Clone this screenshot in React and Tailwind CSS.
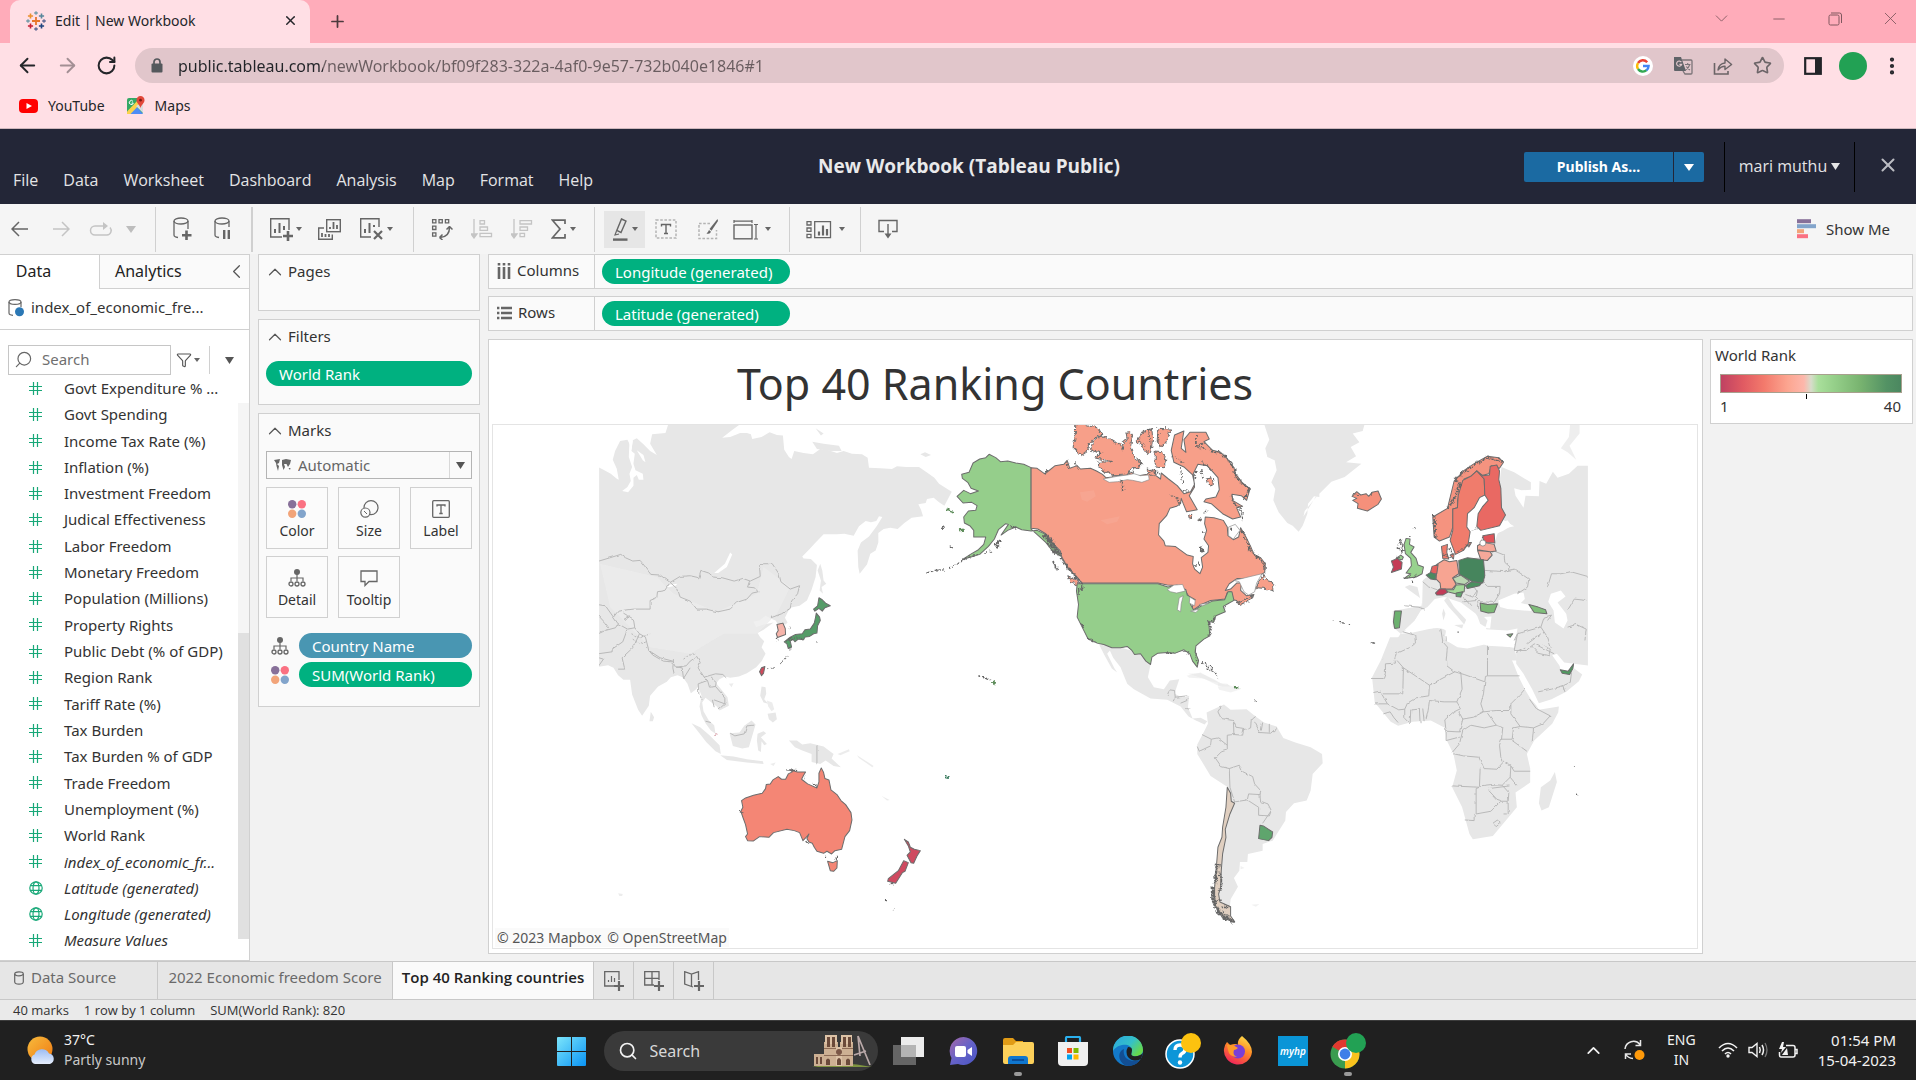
import React from "react";
import { ArrowLeft, ArrowRight, RotateCw, X, Plus, Minus, ChevronDown, ChevronUp, ChevronLeft, Star, MoreVertical, Search, Filter } from "lucide-react";

const UI = "font-['Noto_Sans','Open_Sans',sans-serif]";

/* ---------- small shared pieces ---------- */

function Svg({ w = 24, h = 24, children, className = "" }) {
  return (
    <svg width={w} height={h} viewBox={`0 0 ${w} ${h}`} fill="none" className={`shrink-0 ${className}`} aria-hidden="true">
      {children}
    </svg>
  );
}

function Caret({ className = "text-[#666]", w = 7, h = 5 }) {
  return (
    <Svg w={w} h={h} className={className}>
      <path d={`M0 0H${w}L${w / 2} ${h}Z`} fill="currentColor" />
    </Svg>
  );
}

function FourDots({ s = 18 }) {
  return (
    <svg width={s} height={s} viewBox="0 0 18 18" className="shrink-0" aria-hidden="true">
      <circle cx="4.2" cy="4.2" r="4.2" fill="#877099" />
      <circle cx="13.8" cy="4.2" r="4.2" fill="#fa7182" />
      <circle cx="4.2" cy="13.8" r="4.2" fill="#f2a479" />
      <circle cx="13.8" cy="13.8" r="4.2" fill="#82a4cb" />
    </svg>
  );
}

function DetailIcon() {
  return (
    <Svg w={18} h={18}>
      <circle cx="9" cy="3" r="3" fill="#666" />
      <path d="M9 5V12M3 12V9H15V12" stroke="#666" strokeWidth="1.2" />
      <circle cx="3" cy="15" r="2" stroke="#666" strokeWidth="1.3" />
      <circle cx="9" cy="15" r="2" stroke="#666" strokeWidth="1.3" />
      <circle cx="15" cy="15" r="2" stroke="#666" strokeWidth="1.3" />
    </Svg>
  );
}

function TableauLogo() {
  const plus = (x, y, r, c, w = 1.6) => <path key={`${x}-${y}`} d={`M${x - r} ${y}H${x + r}M${x} ${y - r}V${y + r}`} stroke={c} strokeWidth={w} />;
  return (
    <Svg w={20} h={20}>
      {[
        plus(10, 10, 4, "#e8762b", 1.8), plus(4.5, 5, 2.6, "#eb912c"), plus(15.5, 5, 2.6, "#59879b"),
        plus(4.5, 15, 2.6, "#c72035"), plus(15.5, 15, 2.6, "#1f447e"), plus(10, 2, 1.8, "#7099a6", 1.3),
        plus(10, 18, 1.8, "#5b6591", 1.3), plus(2, 10, 1.8, "#7099a6", 1.3), plus(18, 10, 1.8, "#5b6591", 1.3),
      ]}
    </Svg>
  );
}

/* ---------- browser chrome ---------- */

function BrowserChrome() {
  return (
    <header className={`${UI} shrink-0 bg-[#ffdfe5] text-[#24262a] border-b border-[#cfb7bc]`}>
      <div className="flex h-[43px] items-stretch bg-[#ffacba]">
        <div className="ml-[10px] flex w-[300px] items-center rounded-t-[10px] bg-[#ffdfe5] pr-[12px] pb-[2px] pl-4">
          <TableauLogo />
          <span className="ml-[9px] flex-1 text-[14px]">Edit | New Workbook</span>
          <button aria-label="Close tab"><X size={15} strokeWidth={2.4} /></button>
        </div>
        <button aria-label="New tab" className="ml-[18px] text-[#4c3a3e]"><Plus size={19} strokeWidth={2.2} /></button>
        <div className="ml-auto flex items-center pb-[6px] text-[#80585f]">
          <button aria-label="Search tabs" className="grid w-[57px] place-items-center"><ChevronDown size={21} strokeWidth={1} /></button>
          <button aria-label="Minimize" className="grid w-[57px] place-items-center"><Minus size={18} strokeWidth={1.2} /></button>
          <button aria-label="Restore" className="grid w-[57px] place-items-center">
            <Svg w={15} h={14}><rect x="1" y="3" width="10" height="10" rx="1.5" stroke="currentColor" /><path d="M3 1H11.5Q13.5 1 13.5 3V11" stroke="currentColor" /></Svg>
          </button>
          <button aria-label="Close" className="grid w-[52px] place-items-center"><X size={21} strokeWidth={1} /></button>
        </div>
      </div>
      <div className="flex h-[45px] items-center pr-[15px] pl-[16px]">
        <button aria-label="Back"><ArrowLeft size={23} strokeWidth={2} /></button>
        <button aria-label="Forward" className="ml-[17px] text-[#a38f94]"><ArrowRight size={23} strokeWidth={2} /></button>
        <button aria-label="Reload" className="ml-[17px]"><RotateCw size={21} strokeWidth={2.3} /></button>
        <div className="ml-[18px] flex h-[35px] flex-1 items-center rounded-full bg-[#e1c6cb] pr-[12px] pl-[16px]">
          <Svg w={12} h={15}><path d="M3 6V4a3 3 0 0 1 6 0V6" stroke="#54585c" strokeWidth="1.7" /><rect x="0.5" y="5.5" width="11" height="9" rx="1" fill="#54585c" /></Svg>
          <input
            aria-label="Address"
            readOnly
            value="public.tableau.com/newWorkbook/bf09f283-322a-4af0-9e57-732b040e1846#1"
            className="ml-[15px] min-w-0 flex-1 bg-[linear-gradient(90deg,#222428_145px,#6a5d60_145px)] bg-clip-text text-[16px] text-transparent outline-none"
          />
          <div className="flex items-center gap-[20px] text-[#6b6467]">
            <Svg w={20} h={20}>
              <circle cx="10" cy="10" r="10" fill="#fff" />
              <path d="M14.2 6.2A5.8 5.8 0 0 0 5 7" stroke="#ea4335" strokeWidth="2.4" />
              <path d="M5 7A5.8 5.8 0 0 0 5 13" stroke="#fbbc05" strokeWidth="2.4" />
              <path d="M5 13A5.8 5.8 0 0 0 13.6 14.2" stroke="#34a853" strokeWidth="2.4" />
              <path d="M13.4 14.4A5.8 5.8 0 0 0 15.6 10H10" stroke="#4285f4" strokeWidth="2.4" />
            </Svg>
            <Svg w={20} h={19}>
              <path d="M1 1H8L13 15H2Q1 15 1 14Z" fill="#5f6368" />
              <path d="M9 4H18Q19 4 19 5V17Q19 18 18 18H12L10 15" stroke="#7b7478" strokeWidth="1.3" />
              <path d="M8.4 6.2A2.6 2.6 0 1 0 8.7 8.4H6.4" stroke="#e1c6cb" strokeWidth="1.2" />
              <path d="M12 8.5H17.5M14.7 7V8.5M16.8 8.5Q15.5 12.5 12.6 14M13.4 10.4Q14.8 13 17 14" stroke="#7b7478" strokeWidth="1.1" />
            </Svg>
            <Svg w={20} h={20}>
              <path d="M1.5 7V18H15V15" stroke="currentColor" strokeWidth="1.6" />
              <path d="M5 14Q6 7.5 12 7V3L18.6 8.5L12 13.5V10.3Q8 10.3 5 14Z" stroke="currentColor" strokeWidth="1.4" strokeLinejoin="round" />
            </Svg>
            <Star size={19} strokeWidth={2.1} />
          </div>
        </div>
        <button aria-label="Side panel" className="ml-[20px]"><Svg w={18} h={18}><rect x="1.2" y="1.2" width="15.6" height="15.6" stroke="#222428" strokeWidth="2.2" /><path d="M11 1H17V17H11Z" fill="#222428" /></Svg></button>
        <button aria-label="Profile" className="ml-[17px] h-[28px] w-[28px] rounded-full bg-[#22a154]" />
        <button aria-label="Menu" className="ml-[14px] -mr-[2px]"><MoreVertical size={22} strokeWidth={2.6} /></button>
      </div>
      <nav className="flex h-[40px] items-center pb-[5px] pl-[19px] text-[14px]">
        <a href="#youtube" className="flex items-center">
          <Svg w={19} h={14}><rect width="19" height="14" rx="4" fill="#f00" /><path d="M7.5 4L13 7L7.5 10Z" fill="#fff" /></Svg>
          <span className="ml-[10px]">YouTube</span>
        </a>
        <a href="#maps" className="ml-[21px] flex items-center">
          <Svg w={19} h={19}>
            <rect x="1" y="2" width="16" height="16" rx="2" fill="#34a865" />
            <path d="M3 18L10 10L17 18Z" fill="#4f8df6" />
            <path d="M1 15.5L14 2H17V5L4.5 18H1Z" fill="#fbd24c" />
            <path d="M10 10L17 17V6Z" fill="#d9dcdf" />
            <path d="M14.5 0A4 4 0 0 1 18.5 4.2C18.5 7 15.5 8.5 14.5 12C13.5 8.5 10.5 7 10.5 4.2A4 4 0 0 1 14.5 0Z" fill="#e2483a" />
            <circle cx="14.5" cy="4.2" r="1.4" fill="#7c1c15" />
            <path d="M7 5.4A2 2 0 1 0 7.3 7H5.6" stroke="#fff" />
          </Svg>
          <span className="ml-[10px]">Maps</span>
        </a>
      </nav>
    </header>
  );
}

/* ---------- Tableau header and toolbar ---------- */

function AppHeader() {
  const menus = ["File", "Data", "Worksheet", "Dashboard", "Analysis", "Map", "Format", "Help"];
  return (
    <div className="grid h-[75px] shrink-0 grid-cols-[1fr_auto_1fr] bg-[#232637] text-[#e4e4e6]">
      <nav className="flex items-end gap-[25px] pb-[12px] pl-[13px] font-['Open_Sans',sans-serif] text-[16px] leading-[24px]">
        {menus.map((m) => <button key={m}>{m}</button>)}
      </nav>
      <h1 className="mt-[25px] pl-[22px] font-['Open_Sans',sans-serif] text-[19px] leading-[24px] font-bold text-[#e9e9ea]">New Workbook (Tableau Public)</h1>
      <div className="flex items-start justify-end">
        <div className="mt-[23px] flex h-[30px] gap-px text-white">
          <button className="w-[149px] rounded-l-[2px] bg-[#1b6aa2] pb-[2px] text-[14px] font-bold">Publish As...</button>
          <button aria-label="More publish options" className="grid w-[30px] place-items-center rounded-r-[2px] bg-[#1b6aa2]"><Caret w={10} h={7} className="text-white" /></button>
        </div>
        <button className="mt-[13px] ml-[20px] flex h-[50px] w-[131px] items-center justify-center gap-1 border-x border-black pb-[2px] font-['Open_Sans',sans-serif] text-[16px]">mari muthu <Caret w={9} h={7} className="text-[#e4e4e6]" /></button>
        <button aria-label="Close workbook" className="mt-[25px] mr-[17px] ml-[22px] text-[#bbbcc2]"><X size={22} strokeWidth={2.2} /></button>
      </div>
    </div>
  );
}

function Tool({ label, w, children, className = "" }) {
  return <button aria-label={label} className={`flex h-[37px] items-center justify-center gap-[3px] ${w} ${className}`}>{children}</button>;
}

function Group({ children, className }) {
  return <div className={`flex h-[45px] items-center border-[#d0d0d0] ${className}`}>{children}</div>;
}

const G = "#666";
const L = "#c4c4c4";

function Toolbar() {
  return (
    <div role="toolbar" className="flex h-[50px] shrink-0 items-center bg-[#f5f5f5]">
      <Group className="w-[156px] border-r">
        <Tool label="Undo" w="w-10"><Svg w={18} h={16}><path d="M17 8H1M8 1L1 8L8 15" stroke={G} strokeWidth="1.5" /></Svg></Tool>
        <Tool label="Redo" w="w-[41px]"><Svg w={18} h={16}><path d="M1 8H17M10 1L17 8L10 15" stroke={L} strokeWidth="1.5" /></Svg></Tool>
        <Tool label="Replay" w="w-10"><Svg w={24} h={14}><path d="M17 4H6A4.5 4.5 0 0 0 6 13H18A4.5 4.5 0 0 0 21 5.5" stroke={L} strokeWidth="1.5" /><path d="M14 0L19 4L14 8Z" fill={L} /></Svg></Tool>
        <Tool label="Replay options" w="w-5"><Caret w={10} h={7} className="text-[#bdbdbd]" /></Tool>
      </Group>
      <Group className="w-[97px] border-r-2 pl-[7px]">
        <Tool label="New data source" w="w-10">
          <Svg w={20} h={24}><ellipse cx="8" cy="4" rx="7" ry="3" stroke={G} strokeWidth="1.3" /><path d="M1 4V18Q1 20 5 20.5M15 4V12" stroke={G} strokeWidth="1.3" /><path d="M13.5 13.5V23M9 18.3H18.5" stroke={G} strokeWidth="2.6" /></Svg>
        </Tool>
        <Tool label="Pause updates" w="w-[38px]">
          <Svg w={17} h={24}><ellipse cx="8" cy="4" rx="7" ry="3" stroke={G} strokeWidth="1.3" /><path d="M1 4V18Q1 20 5 20.5M15 4V10" stroke={G} strokeWidth="1.3" /><path d="M10.2 13V22M14.8 13V22" stroke={G} strokeWidth="2.4" /></Svg>
        </Tool>
      </Group>
      <Group className="w-[161px] border-r pl-[11px]">
        <Tool label="New worksheet" w="w-[42px]">
          <Svg w={24} h={24}><path d="M13 20H1.7V1.7H20V13" stroke={G} strokeWidth="1.4" /><path d="M6 16V12M10.5 16V6M15 13V9" stroke={G} strokeWidth="2" /><path d="M19 14V24M14 19H24" stroke={G} strokeWidth="2.6" /></Svg>
          <Caret w={6} h={4} />
        </Tool>
        <Tool label="Duplicate" w="w-[46px]">
          <Svg w={23} h={23}><rect x="8.7" y="1.7" width="13.6" height="12" stroke={G} strokeWidth="1.4" /><path d="M12 11V9M15.5 11V4M19 11V7" stroke={G} strokeWidth="1.8" /><path d="M6 10H.7V21.3H14.3V16.5" stroke={G} strokeWidth="1.4" /><path d="M4 19V15M7.5 19V16M11 19V16" stroke={G} strokeWidth="1.8" /></Svg>
        </Tool>
        <Tool label="Clear sheet" w="w-[48px]">
          <Svg w={25} h={24}><path d="M12 20H1.7V1.7H20V10" stroke={G} strokeWidth="1.4" /><path d="M6 16V12M10.5 16V6M15 10V8" stroke={G} strokeWidth="2" /><path d="M15 14L23 22M23 14L15 22" stroke={G} strokeWidth="2.2" /></Svg>
          <Caret w={6} h={4} />
        </Tool>
      </Group>
      <Group className="w-[181px] border-r pl-2">
        <Tool label="Swap rows and columns" w="w-10">
          <Svg w={22} h={22}>
            <path d="M1.6 1.6H4.9V4.9H1.6ZM8 1.6H11.3V4.9H8ZM14.4 1.6H17.7V4.9H14.4ZM1.6 8.2H4.9V11.5H1.6ZM1.6 14.8H4.9V18.1H1.6Z" stroke={G} strokeWidth="1.3" />
            <path d="M9 19.5Q18.5 19 18.5 9.5M8.5 19.5L11.5 16.5M8.5 19.5L11.5 22M18.5 8.5L15.5 11.5M18.5 8.5L21.5 11.5" stroke={G} strokeWidth="1.5" />
          </Svg>
        </Tool>
        <Tool label="Sort ascending" w="w-10">
          <Svg w={22} h={20}><path d="M3 0V18M0 15H6L3 19Z" stroke={L} strokeWidth="1.3" fill={L} /><path d="M9 1.7H13.5V5H9ZM9 8H16.5V11.3H9ZM9 14.4H20.5V17.7H9Z" stroke={L} strokeWidth="1.3" /></Svg>
        </Tool>
        <Tool label="Sort descending" w="w-10">
          <Svg w={22} h={20}><path d="M3 0V18M0 15H6L3 19Z" stroke={L} strokeWidth="1.3" fill={L} /><path d="M9 1.7H20.5V5H9ZM9 8H16.5V11.3H9ZM9 14.4H13.5V17.7H9Z" stroke={L} strokeWidth="1.3" /></Svg>
        </Tool>
        <Tool label="Totals" w="w-[42px]">
          <Svg w={16} h={20}><path d="M14 5V1.2H1.5L9 10L1.5 18.8H14V15" stroke={G} strokeWidth="1.7" /></Svg>
          <Caret w={6} h={4} />
        </Tool>
      </Group>
      <Group className="w-[195px] border-r pl-[9px]">
        <Tool label="Highlight" w="w-[41px]" className="bg-[#e6e6e6]">
          <Svg w={17} h={23}><path d="M9.5 1L14 3L9 14.5L4.8 12.5Z" stroke={G} strokeWidth="1.4" /><path d="M4.5 13L3 17L7 16" stroke={G} strokeWidth="1.2" /><path d="M1 21.6H15.5" stroke={G} strokeWidth="2.4" /></Svg>
          <Caret w={6} h={4} />
        </Tool>
        <Tool label="Mark labels" w="w-[42px]">
          <Svg w={22} h={20}><rect x="1" y="1" width="20" height="18" stroke="#b4b4b4" strokeWidth="1.5" strokeDasharray="2.6 1.6" /><path d="M6.5 7.5V5.5H15.5V7.5M11 5.5V14.5M9 14.5H13" stroke={G} strokeWidth="1.4" /></Svg>
        </Tool>
        <Tool label="Format workbook" w="w-[42px]">
          <Svg w={21} h={22}><path d="M12 5.5H1V20.5H18.5V12" stroke="#b4b4b4" strokeWidth="1.5" strokeDasharray="2.6 1.6" /><path d="M19.5 1L11.5 11L13.5 12.8L20 3Z" fill={G} /><path d="M11 12L13 13.8Q12 16.5 8.5 15.5Q10 14.5 11 12Z" fill={G} /></Svg>
        </Tool>
        <Tool label="Fit" w="w-[46px]">
          <Svg w={25} h={21}><path d="M1 1V4M19 1V4M1 2.2H19M21 5.500H25M21 20H25M23 5V20" stroke={G} strokeWidth="1.2" /><rect x="1" y="6" width="18" height="13.8" stroke={G} strokeWidth="1.4" /></Svg>
          <span className="pl-1"><Caret w={6} h={4} /></span>
        </Tool>
      </Group>
      <Group className="w-[71px] justify-center border-r">
        <Tool label="Show or hide cards" w="w-10">
          <Svg w={26} h={19}><path d="M1 1.7H5V5H1ZM1 8H5V11.3H1ZM1 14.4H5V17.7H1ZM8.7 1.7H24.5V17.7H8.7Z" stroke={G} strokeWidth="1.3" /><path d="M13 15.5V11.5M17 15.5V5.5M21 15.5V9" stroke={G} strokeWidth="2.2" /></Svg>
          <span className="pl-1"><Caret w={6} h={4} /></span>
        </Tool>
      </Group>
      <Tool label="Download" w="w-[54px]">
        <Svg w={20} h={20}><path d="M6 12.5H1V1.5H19V12.5H14M10 5V17" stroke={G} strokeWidth="1.4" /><path d="M6.5 14.5H13.5L10 19.5Z" fill={G} /></Svg>
      </Tool>
      <button className="mr-[26px] ml-auto flex items-center gap-[10px] text-[15px] text-[#333]">
        <Svg w={19} h={20}><path d="M0 2.2H14" stroke="#877099" strokeWidth="4" /><path d="M0 7.2H19" stroke="#82a4cb" strokeWidth="4" /><path d="M0 12.2H7" stroke="#f2a479" strokeWidth="4" /><path d="M0 17.2H11" stroke="#fa7182" strokeWidth="4" /></Svg>
        Show Me
      </button>
    </div>
  );
}

/* ---------- data pane ---------- */

const FIELDS = [
  ["Govt Expenditure % ..."], ["Govt Spending"], ["Income Tax Rate (%)"], ["Inflation (%)"], ["Investment Freedom"],
  ["Judical Effectiveness"], ["Labor Freedom"], ["Monetary Freedom"], ["Population (Millions)"], ["Property Rights"],
  ["Public Debt (% of GDP)"], ["Region Rank"], ["Tariff Rate (%)"], ["Tax Burden"], ["Tax Burden % of GDP"],
  ["Trade Freedom"], ["Unemployment (%)"], ["World Rank"], ["index_of_economic_fr...", "it"], ["Latitude (generated)", "geo"],
  ["Longitude (generated)", "geo"], ["Measure Values", "it"],
];

function DataPane() {
  return (
    <aside className="flex w-[250px] shrink-0 flex-col border-r border-b border-[#d0d0d0] bg-white text-[#333]">
      <div className="flex h-[35px] border-t border-[#d0d0d0] text-[16px] text-[#222]">
        <button className="w-[99px] pr-[32px] pb-[2px] text-center">Data</button>
        <div className="flex flex-1 items-center border-b border-l border-[#d0d0d0] bg-[#fafafa] pl-[15px]">
          <button className="pb-px">Analytics</button>
          <button aria-label="Collapse pane" className="mr-px ml-auto text-[#555]"><ChevronLeft size={23} strokeWidth={1.3} /></button>
        </div>
      </div>
      <button className="flex h-[41px] items-center border-b border-[#d0d0d0] pb-[3px] pl-[8px] text-[15px]">
        <Svg w={17} h={18}><ellipse cx="7" cy="3" rx="6" ry="2.4" stroke={G} strokeWidth="1.2" /><path d="M1 3V14Q1 16 5 16.3M13 3V8" stroke={G} strokeWidth="1.2" /><circle cx="11.5" cy="12.7" r="4.5" fill="#2b78b5" /></Svg>
        <span className="ml-[6px]">index_of_economic_fre...</span>
      </button>
      <div className="mt-[15px] flex h-[30px] items-center">
        <label className="ml-[8px] flex h-[30px] w-[163px] items-center border border-[#c6c6c6] pb-px pl-[5px] text-[#666]">
          <Search size={19} strokeWidth={1.5} className="-scale-x-100" />
          <input type="text" aria-label="Search fields" placeholder="Search" className="ml-[9px] w-[110px] text-[15px] outline-none placeholder:text-[#6f6f6f]" />
        </label>
        <button aria-label="Filter fields" className="ml-[5px] flex items-center gap-[2px] text-[#555]"><Filter size={16} strokeWidth={1.7} /><Caret w={6} h={4} /></button>
        <span className="ml-[9px] h-[28px] w-px bg-[#d0d0d0]" />
        <button aria-label="Pane menu" className="ml-[15px]"><Caret w={9} h={7} className="text-[#555]" /></button>
      </div>
      <div className="flex min-h-0 flex-1">
        <ul className="flex flex-1 flex-col pb-[6px] text-[15px] text-[#333]">
          {FIELDS.map(([name, kind]) => (
            <li key={name} className="flex min-h-0 flex-1 items-center whitespace-nowrap">
              <span className="w-[64px] shrink-0 pl-[29px]">
                {kind === "geo" ? (
                  <Svg w={14} h={14}><g stroke="#18a878" strokeWidth="1.2"><circle cx="7" cy="7" r="6.2" /><ellipse cx="7" cy="7" rx="3" ry="6.2" /><path d="M1.5 4.6H12.5M1.5 9.4H12.5" /></g></Svg>
                ) : (
                  <Svg w={13} h={13}><path d="M4.5 0V13M8.5 0V13M0 4.5H13M0 8.5H13" stroke="#18a878" strokeWidth="1.2" /></Svg>
                )}
              </span>
              <span className={kind ? "italic" : ""}>{name}</span>
            </li>
          ))}
        </ul>
        <div className="-ml-[11px] mt-[28px] mb-[21px] flex w-[11px] shrink-0 flex-col justify-end bg-[#f5f5f5]">
          <div className="h-[57%] bg-[#e0e0e0]" />
        </div>
      </div>
    </aside>
  );
}

/* ---------- shelves and cards ---------- */

function CardTitle({ children }) {
  return (
    <button className="flex h-[33px] items-center gap-[2px] pl-[5px] text-[15px] text-[#333]">
      <ChevronUp size={22} strokeWidth={1.3} className="text-[#555]" />
      {children}
    </button>
  );
}

function Pill({ children, className = "" }) {
  return <button className={`h-[25px] rounded-full pl-[13px] text-left text-[15px] leading-[24px] text-white ${className}`}>{children}</button>;
}

function MarkButton({ label, children }) {
  return (
    <button className="flex h-[62px] w-[62px] flex-col items-center justify-end gap-[4px] border border-[#d0d0d0] bg-[#fbfbfb] pb-[8px] text-[14px] leading-[18px] text-[#333]">
      {children}
      {label}
    </button>
  );
}

function Cards() {
  const card = "flex flex-col border border-[#d0d0d0] bg-[#fafafa]";
  return (
    <div className="ml-[8px] flex w-[222px] shrink-0 flex-col gap-[8px]">
      <section className={`${card} h-[57px]`}><CardTitle>Pages</CardTitle></section>
      <section className={`${card} h-[86px]`}>
        <CardTitle>Filters</CardTitle>
        <Pill className="mx-[7px] mt-[8px] bg-[#00b180]">World Rank</Pill>
      </section>
      <section className={`${card} h-[294px]`}>
        <CardTitle>Marks</CardTitle>
        <div className="relative mx-[7px] mt-[4px] h-[28px]">
          <select aria-label="Mark type" className="h-full w-full appearance-none border border-[#b4b4b4] bg-[#fafafa] pl-[31px] text-[15px] text-[#666]"><option>Automatic</option></select>
          <div className="pointer-events-none absolute inset-y-0 left-0 flex items-center pl-[8px]">
            <Svg w={17} h={12}><path d="M0 1L6 0L5 4L3 5L5 7L4 12L2.5 7L2 4Z M8 1L12 0L17 1L16 5L14 8L12.5 5L10 5L11 8L9.5 11L8 6Z M14.5 9L16.5 9L16 11Z" fill={G} /></Svg>
          </div>
          <div className="pointer-events-none absolute inset-y-px right-px grid w-[22px] place-items-center border-l border-[#d8d8d8]"><Caret w={9} h={7} className="text-[#555]" /></div>
        </div>
        <div className="mx-[7px] mt-[8px] grid grid-cols-3 justify-between gap-x-[10px] gap-y-[7px]">
          <MarkButton label="Color"><FourDots /></MarkButton>
          <MarkButton label="Size"><Svg w={19} h={18}><circle cx="11" cy="7.6" r="7" stroke={G} strokeWidth="1.2" /><circle cx="5.4" cy="12.6" r="4.6" fill="#fbfbfb" stroke={G} strokeWidth="1.2" /><path d="M4 11L7 14" stroke={G} /></Svg></MarkButton>
          <MarkButton label="Label"><Svg w={18} h={18}><rect x=".7" y=".7" width="16.6" height="16.6" rx="1" stroke={G} strokeWidth="1.3" /><path d="M5 6.5V5H13V6.5M9 5V13.5M7.3 13.5H10.7" stroke={G} strokeWidth="1.3" /></Svg></MarkButton>
          <MarkButton label="Detail"><DetailIcon /></MarkButton>
          <MarkButton label="Tooltip"><Svg w={18} h={17}><path d="M1 1H17V11.5H9L5 15.5V11.5H1Z" stroke={G} strokeWidth="1.3" /></Svg></MarkButton>
        </div>
        <div className="mt-[15px] flex flex-col gap-[4px] pr-[7px] pl-[12px]">
          <div className="flex items-center"><DetailIcon /><Pill className="ml-[10px] flex-1 bg-[#4996b2]">Country Name</Pill></div>
          <div className="flex items-center"><FourDots /><Pill className="ml-[10px] flex-1 bg-[#00b180]">SUM(World Rank)</Pill></div>
        </div>
      </section>
    </div>
  );
}

function Shelf({ label, icon, pill }) {
  return (
    <div className="flex h-[35px] items-stretch border border-[#d0d0d0] bg-[#fafafa]">
      <div className="flex w-[106px] items-center gap-[6px] border-r border-[#d0d0d0] pb-[2px] pl-[8px] text-[15px] text-[#333]">{icon}{label}</div>
      <Pill className="mt-[4px] ml-[7px] w-[188px] bg-[#00b180]">{pill}</Pill>
    </div>
  );
}

/* ---------- map ---------- */

const LAND = "#e7e7e7";

function WorldMap() {
  const line = { fill: "none", stroke: "#b5b5b5", strokeWidth: 2.8, strokeLinejoin: "round", filter: "url(#wobble)" };
  const edge = { stroke: "#6c6c6c", strokeWidth: 3, strokeLinejoin: "round" };
  const rough = { fill: "none", stroke: "#666", strokeLinejoin: "round", filter: "url(#jag)" };
  return (
    <svg viewBox="493 425 1203 522" preserveAspectRatio="xMidYMid meet" className="block h-full w-full" role="img" aria-label="World map of the top 40 ranking countries">
      <defs>
        <clipPath id="mapArea"><rect x="599" y="424" width="988" height="524" /></clipPath>
        <filter id="jag" x="-5%" y="-5%" width="110%" height="110%"><feTurbulence type="fractalNoise" baseFrequency=".09" numOctaves="2" seed="4" /><feDisplacementMap in="SourceGraphic" scale="16" xChannelSelector="R" yChannelSelector="G" /></filter>
        <filter id="wobble" x="-5%" y="-5%" width="110%" height="110%"><feTurbulence type="fractalNoise" baseFrequency=".05" numOctaves="2" seed="9" /><feDisplacementMap in="SourceGraphic" scale="8" xChannelSelector="R" yChannelSelector="G" /></filter>
      </defs>
      <g clipPath="url(#mapArea)">
        {/* Asia and the Pacific */}
        <g transform="translate(590 420) scale(.333333)">
          <g fill={LAND}>
            <path d="M20 138L40 148L62 160L80 175L86 178L80 145L68 118L75 92L90 62L112 58L120 75L124 90L128 60L140 54L160 72L180 92L200 104L180 70L186 42L226 38L235 10H452L425 30L396 52L420 50L450 38L470 38L482 42L486 56L514 50L538 36L560 44L578 46L582 88L596 110L604 116L612 92L640 98L668 102L690 86L715 90L740 98L760 92L785 100L815 102L832 112L836 142L870 144L905 146L920 138L948 140L986 140L1012 158L1032 172L1046 190L1084 214L1074 234L1062 256L1046 246L1030 232L1010 236L1006 248L984 252L992 268L998 288L964 292L942 308L922 326L900 322L880 326L864 338L864 350L864 366L856 390L840 400L830 432L808 460L804 440L802 390L812 366L836 348L850 330L860 316L876 290L866 288L858 302L842 306L826 302L806 318L790 346L762 340L740 342L700 342L676 366L656 388L636 408L640 414L662 416L680 434L676 470L664 508L650 540L628 556L600 562L592 576L584 592L592 606L586 612L562 610L556 600L544 596L526 586L508 600L490 604L498 620L520 612L550 606L520 628L502 638L510 650L522 662L514 680L526 700L514 722L498 740L470 758L446 768L420 772L404 768L388 776L378 788L394 808L412 830L416 856L388 870L380 858L364 846L346 832L336 846L340 872L356 900L372 914L376 940L362 930L346 908L334 884L328 858L334 826L324 798L318 806L302 818L292 790L278 770L262 764L242 770L230 784L204 798L180 826L176 856L156 886L144 868L126 822L120 778L100 778L84 764L70 742L54 734L20 740Z" />
            <path d="M690 430L696 450L700 480L708 490L694 500L698 520L688 510L692 480L682 450Z" />
            <path d="M666 64L700 70L746 76L754 92L720 92L680 86ZM676 24L700 40L692 46ZM990 102L1004 96L1022 104L1006 110Z" />
            <path d="M182 874L192 890L188 902L178 902ZM304 908L330 920L358 944L388 974L392 1000L376 992L348 964L326 936ZM390 1004L430 1008L470 1016L518 1022L520 1030L470 1026L410 1018ZM418 938L448 936L462 916L484 900L496 912L488 940L476 980L456 984L428 976ZM514 798L526 800L528 820L522 836L534 850L520 846L510 826ZM532 880L556 876L560 896L548 906L536 896ZM502 940L520 932L528 938L512 950L530 970L522 974L514 962L512 994L504 990L500 960ZM596 960L620 960L636 972L660 968L700 978L730 1000L724 1014L752 1040L730 1036L706 1020L690 1030L664 1024L664 1000L636 990L614 980Z" />
            <path d="M540 1030L556 1026L550 1036ZM742 1000L776 986L778 992L750 1004ZM800 1004L850 1036L846 1040L806 1012ZM874 1126L898 1138L890 1140ZM84 1418L98 1420L96 1426H88ZM416 790L430 788L424 800ZM530 840L546 846L552 866L544 872L534 858Z" opacity=".8" />
          </g>
          <path d="M118 64L128 60L124 92L134 100L130 130L136 150L158 160L160 178L146 178L140 164L130 172L130 196L114 216L96 212L112 200L122 182L118 160L126 140L116 110Z M140 90L160 104L166 126L158 120Z M420 396L426 402L410 440L384 458L372 458L404 430Z M262 490L256 496L226 502L240 492Z" fill="#fff" />
          <path d="M30 430L200 470L250 520L380 575L500 520L520 440L600 500L560 580L500 640L400 640L300 700L180 680L60 560Z" fill="#ececec" opacity=".8" />
          <g {...line}>
            <path d="M20 424L60 412L92 402L106 412L128 422L150 420L166 440L182 462L210 464L240 486L270 468L300 466L326 472L332 450L356 458L370 470L396 472L432 482L458 474L480 482L510 468L508 440L520 430L546 430L566 460L572 484L600 506L628 496L622 520L604 542L600 564L574 580L542 592" />
            <path d="M240 486L262 506L270 530L300 542L320 566L350 566L384 574L420 566L440 546L470 536L486 518L504 514L492 502L472 500L478 482" />
            <path d="M240 486L224 510L202 514L200 532L180 540L180 566L130 566L84 572L70 590L46 556L20 552M70 590L84 610L76 622L46 630L20 642M84 610L112 626L134 622L130 596L100 578M134 622L148 640L166 650L176 690L210 712L248 722L258 740L288 736L300 722L320 708L330 726L324 742L342 770L376 760L398 762L408 772M112 626L98 664L66 686L66 694L24 700L20 710L40 716L26 736M148 640L130 680L96 712L104 746L84 746M176 690L188 704L220 722L246 724M250 716L248 742L252 760M258 740L276 742L280 774L300 742M342 770L352 780L324 790L326 820L336 838M352 780L358 800L376 798L404 830L404 850L366 836L372 860M376 798L378 786L360 770M404 850L386 866M346 902L362 906M420 938L434 946L462 940L470 916L492 914" />
            <path d="M124 640L150 652L180 640M128 656L150 672L168 664M280 716L300 702L316 700" strokeDasharray="6 4" />
            <path d="M20 580L44 606L56 622M680 972V1028M100 592L118 586L106 600Z" />
          </g>
          <g {...edge}>
            <path d="M560 612L578 608L585 624L586 642L562 651L558 640L564 630Z" fill="#f6b4aa" />
            <path d="M686 532L696 538L706 548L720 556L704 562L696 572L686 564L674 572L670 566L682 556ZM678 578L688 590L690 600L682 616L680 638L670 640L658 648L644 650L640 658L624 656L614 664L608 656L600 662L604 680L594 684L590 670L582 664L600 650L616 642L636 640L644 628L660 626L672 608L676 590Z" fill="#559c68" />
            <path d="M514 742L524 738L520 758L514 766L508 754Z" fill="#cf4a5c" />
            <path d="M454 1140L466 1132L490 1124L516 1118L526 1104L528 1092L540 1090L548 1078L564 1068L574 1076L586 1076L594 1060L606 1054L600 1048L622 1054L646 1054L640 1064L634 1076L652 1090L680 1102L686 1084L686 1058L693 1042L700 1056L704 1074L716 1078L722 1108L740 1122L752 1140L766 1152L782 1176L785 1198L778 1230L764 1248L754 1286L734 1290L724 1300L710 1292L700 1298L680 1292L672 1280L666 1268L656 1264L650 1254L656 1240L646 1252L638 1260L628 1236L612 1230L590 1226L550 1236L536 1250L508 1248L490 1261L472 1260L466 1248L472 1240L466 1212L458 1190L452 1172L458 1160ZM712 1322L728 1326L741 1320L740 1342L730 1352L720 1350Z" fill="#f48675" />
            <path d="M942 1256L954 1264L960 1280L972 1286L990 1290L980 1306L970 1328L962 1326L950 1304L960 1294L954 1276ZM940 1320L954 1326L944 1352L936 1356L916 1388L892 1382L894 1374L924 1350Z" fill="#cf4a60" />
          </g>
          <g {...rough}>
            <path d="M584 662L612 652L642 656M556 656L568 660M598 682L600 692M592 704L572 730M554 742L530 746" strokeWidth="4" strokeDasharray="5 5" />
            <path d="M588 1048L622 1050M644 1066L646 1074M646 1262L656 1270M450 1172L458 1176M704 1310H708M738 1308V1316M898 1392L906 1390M884 1440H890M910 1464H914M668 1088L680 1098M680 662V666M596 618L600 622" strokeWidth="4" />
            <path d="M1062 1066L1074 1069" stroke="#3c7d60" strokeWidth="6" />
            <path d="M372 942H378" stroke="#a83145" strokeWidth="5" />
          </g>
        </g>

        {/* North America */}
        <g transform="translate(920 420) scale(.333333)">
          <g fill={LAND}>
            <path d="M1030 10L1046 58L1034 84L1040 110L1062 120L1068 150L1052 186L1064 206L1058 240L1074 276L1100 308L1116 316L1134 334L1146 316L1160 280L1162 250L1180 228L1196 230L1196 212L1130 318H1142L1152 272L1190 226L1232 184L1272 170L1322 130L1276 126L1306 108L1290 80L1316 66L1296 40L1326 32L1332 10Z" />
            <path d="M534 668L570 676L604 682L632 690L642 704L660 698L690 732L682 770L700 800L730 806L748 780L776 776L768 800L762 820L784 830L806 826L802 860L816 894L840 892L860 902L852 912L826 900L804 888L780 858L740 838L690 834L640 806L620 790L600 740L578 712L568 690L560 700L582 744L590 756L574 744L552 704Z" />
            <path d="M798 766L840 756L890 784L930 800L890 794L850 774L806 772ZM892 800L920 792L960 806L930 816L896 808Z" opacity=".55" />
          </g>
          <g {...edge}>
            <path d="M332 142L310 132L286 128L262 122L240 124L226 112L206 102L196 112L178 116L158 128L146 156L124 162L126 174L142 186L152 204L174 212L150 220L130 210L110 228L128 248L154 246L170 256L166 270L144 272L130 290L132 308L148 316L160 330L160 350L196 350L190 372L174 388L150 402L128 416L152 410L178 402L204 378L222 356L234 328L256 310L264 312L242 344L262 330L286 320L304 328L332 332L350 330L376 342L396 370L420 398L422 408L398 394L376 366L352 344L332 326Z" fill="#95ce8b" />
            <path d="M332 142L350 144L372 160L384 152L404 136L430 132L440 120L448 144L470 136L480 146L510 144L528 152L546 162L556 172L576 170L612 166L634 156L646 168L680 162L690 150L704 150L706 166L720 176L722 158L744 176L770 196L790 220L810 214L822 192L816 164L790 140L760 126L752 90L762 44L790 32L786 56L782 84L796 96L790 58L808 36L856 36L866 56L850 64L876 90L900 96L920 116L940 142L944 160L964 186L988 206L978 240L962 226L934 222L936 240L966 258L948 262L960 290L936 296L906 280L872 250L850 244L856 236L886 230L896 208L892 172L860 136L832 132L818 160L822 200L806 226L830 268L798 274L788 250L782 234L780 250L768 258L748 264L738 286L716 310L714 344L730 362L734 376L764 378L800 404L818 408L816 430L822 446L838 460L846 440L842 412L862 396L864 376L850 356L858 330L852 310L854 290L880 292L908 300L920 320L922 346L938 358L954 350L960 322L976 350L990 378L1000 402L1020 412L1034 430L1032 456L1010 470L990 474L950 474L926 490L914 510L930 506L948 488L962 488L960 510L978 526L1000 522L996 532L954 552L948 540L936 538L930 514L920 516L914 536L870 540L842 552L828 562L812 572L818 550L806 530L792 508L776 496L740 494L712 488H484L470 470L444 446L424 410L420 392L396 368L376 340L352 326L332 324Z" fill="#f79f89" />
            <g filter="url(#jag)">
              <path d="M466 10L464 50L458 80L482 106L500 94L504 76L520 56L544 42L526 18ZM546 44L520 62L510 90L540 98L524 112L576 124L532 126L548 154L580 166L620 164L634 140L660 146L660 124L640 112L630 80L636 46L628 34L616 36L620 58L606 70L608 88L596 66L586 68L570 58ZM664 36L694 24L696 56L692 92L682 100L666 80L650 62ZM712 24L750 26L736 66L718 82L710 62ZM704 92L726 94L736 120L730 142L704 140ZM680 146L700 150L704 166L690 168ZM860 176L874 172L878 190L864 194ZM804 284L816 282L816 290L806 294ZM836 292L842 302L832 300ZM1034 458L1028 476L1054 484L1060 512L1036 504L1008 502L1014 484L1026 466ZM442 466L470 480L484 502L474 498L448 480ZM950 546L996 526L990 538L960 552Z" fill="#f79f89" />
            </g>
            <path d="M470 490H712L742 500L770 494L796 508L800 524L824 538L810 552L820 570L846 554L876 542L912 538L922 514L934 514L940 540L922 550L908 558L914 574L886 586L878 606L864 602L868 646L850 656L826 676L824 696L834 720L830 740L816 722L808 700L790 688L764 698L740 696L712 698L694 710L690 732L676 722L660 700L642 702L634 690L620 678L600 682L574 682L550 672L530 668L502 654L482 614L470 590L474 552L468 512Z" fill="#95ce8b" />
          </g>
          <path d="M740 508L760 494L786 492L794 512L768 518L750 514ZM776 532L788 526L782 550L780 574L770 568ZM808 530L824 540L822 556L806 548ZM810 572L836 566L826 576ZM836 552L866 548L846 556ZM548 176L590 168L620 164L640 160L660 166L684 164L686 178L664 186L636 180L620 178L592 184L566 186ZM940 480L1024 460L1008 488L1002 514L984 524L970 514L956 484ZM924 320L944 312L958 330L938 356L924 346Z" fill="#fff" stroke="#8b8b8b" strokeWidth="2" />
          <g {...rough}>
            <path d="M18 458L42 450L74 448M86 444L112 430L140 412L176 402" strokeWidth="4" strokeDasharray="9 4" />
            <path d="M222 374L240 360M226 382L238 372M270 318L288 322M66 320L72 324M90 376L96 384M208 394H212M192 398H196" strokeWidth="6" />
            <path d="M78 268L102 276" stroke="#5f8d5b" strokeWidth="7" /><path d="M116 330L130 328" stroke="#5f8d5b" strokeWidth="7" />
            <path d="M372 342L396 370L418 404M378 350L406 400" strokeWidth="12" strokeDasharray="7 2" />
            <path d="M398 422L410 446M420 412L448 448L484 490L486 508" strokeWidth="7" strokeDasharray="8 2 3 1" />
            <path d="M474 500L476 524M482 606L490 622M500 652L528 666" strokeWidth="4" />
            <path d="M868 90L904 100L920 116L940 142L944 162L964 190L986 204L970 238" strokeWidth="6" strokeDasharray="9 2 3 2" />
            <path d="M936 226L940 250L964 270L962 306M964 330L990 390L1032 430L1034 452M1058 484L1058 514" strokeWidth="5" strokeDasharray="9 2 4 3" />
            <path d="M826 44V76L856 66M832 80L858 88M844 122L872 150M750 224L776 238L774 262M784 210L808 216M600 178L610 212M700 150L720 164M640 150L664 130M380 150L374 162M440 122L444 146M466 126L470 148M840 150L848 172M826 152L820 178M852 270L860 276" strokeWidth="5" strokeDasharray="6 3" />
            <path d="M838 376L846 396M834 430H838M846 336H850M824 436H828M934 322V328" strokeWidth="7" />
            <path d="M862 600L872 622L866 646M876 606L882 588M912 558L906 566M824 680L830 738M740 698H760M790 690L806 698" strokeWidth="5" strokeDasharray="6 3" />
            <path d="M844 724L856 728L862 748L878 752M866 736L888 762L894 774" strokeWidth="5" strokeDasharray="5 4" />
            <path d="M174 766L210 778" strokeWidth="5" strokeDasharray="7 5" /><path d="M216 784L226 788" stroke="#5f8d5b" strokeWidth="8" />
            <path d="M684 26L690 84M656 62L676 80M712 30L716 76M780 140L786 190M756 106L792 130M528 96L548 98M548 152L576 158" strokeWidth="3" strokeDasharray="6 3" />
          </g>
          <path d="M478 216L520 210L526 228L500 244L484 238ZM540 300L598 288L590 304L560 312Z" fill="#fff" opacity=".07" />
        </g>

        {/* South America and Africa */}
        <g transform="translate(1130 640) scale(.333333)">
          <g fill={LAND}>
            <path d="M228 216L262 200L280 192L300 208L348 206L372 226L400 246L438 258L458 292L494 306L540 320L574 340L576 368L546 400L540 450L528 480L490 488L466 514L464 540L426 600L396 610L396 630L352 640L350 664L328 664L326 690L310 712L322 738L300 776L296 820L316 844L280 836L258 800L262 680L284 560L292 440L240 406L200 340L200 312L222 270L232 250Z" />
            <path d="M826 -10H778L750 60L724 110L732 186L780 244L802 256L846 244L900 240L942 262L948 300L968 340L978 390L964 440L994 500L1016 580L1026 596L1086 586L1130 534L1158 500L1154 456L1198 426L1198 384L1188 340L1210 300L1264 250L1282 216L1284 198L1224 208L1216 194L1200 176L1184 150L1164 110L1148 70L1142 56L1150 26L1090 18L1060 14L1030 28L1000 22L974 6L950 10L940 -10Z" />
            <path d="M1156 28L1156 70L1178 100L1204 146L1224 188L1262 176L1306 154L1344 122L1354 102L1330 84L1318 98L1290 92L1286 76L1264 44L1278 40L1300 66L1380 76V-20H1160Z" />
            <path d="M1272 394L1278 424L1254 500L1232 510L1224 488L1230 440L1258 420Z" />
            <path d="M362 792L386 790L376 798ZM330 676L342 682L330 686ZM172 100L210 98L250 116L270 128L240 122L200 108ZM262 128L290 130L298 138L262 138Z" opacity=".6" />
          </g>
          <g {...line}>
            <path d="M272 196L262 214L272 234L308 240L310 282L290 284L290 328L272 334L254 352L272 378L296 384L326 374L334 392L366 408L372 430L390 450L388 462L354 460L350 478L312 484L298 440L296 384M308 240L316 260L340 264L336 284L310 282M340 270L360 262L362 236L372 228M372 244L388 276L420 278L438 262M396 246L392 270M416 250V276M214 282L242 296L240 316L206 332L200 318M242 296L262 292L290 314M350 478L384 500L384 524L416 526L422 510L412 490L390 482L388 462M422 510L396 548M110 166L116 148L132 150L134 170L128 182M134 170L170 166M150 188L174 178M164 204L180 206" />
            <path d="M792 52L818 82L816 160H756M818 82L896 134L972 94L1000 102L1062 124L1064 108L1070 106V14M1070 106H1166M946 -10L948 76L972 94M948 36L944 20M792 52L794 68L764 70V98L758 114H724M792 52V40L854 12L848 -10M896 134L894 166L856 172L830 188L822 206L804 208M990 96L994 146L978 184L940 184L896 180L892 210L886 236M978 184L990 204L966 216L942 238L946 272L986 274L996 236L984 214M1062 124L1058 160L1050 190L1058 214L1028 230L994 236M1058 214L1096 210L1132 210L1140 190L1168 162L1182 146M1140 190L1140 220L1168 258L1208 262L1236 250L1258 226L1216 204L1196 176M1070 218L1096 254L1060 262L1020 254L996 270L986 310L964 336M1096 254L1116 260L1112 296L1106 314L1110 350L1118 364L1098 386L1060 384L1044 350L998 346L970 340M1112 296L1144 296L1148 262L1168 258M1144 300L1188 332M1208 262L1204 304M1118 364L1140 376L1138 410L1114 434L1080 432L1046 436L1048 384M1140 376L1150 392H1198M1138 410L1158 434M1114 434L1134 456L1132 482H1110L1080 512L1036 520V444L1046 440L962 436M1030 520V540L1002 538M1132 482V520M1086 548L1100 538L1108 548L1096 558ZM822 206V234L838 250L840 208L866 206L868 248M876 204L880 242M728 156L748 152L770 190L730 190M758 220L778 214L790 232L802 246M946 274V300L984 290M804 208L770 190M1074 450L1098 476L1110 480M1074 444L1136 436M1118 520H1128" />
            <path d="M1182 -2L1220 38L1254 46L1258 26L1220 0M1156 36L1182 24L1182 0M1222 154L1262 146L1296 136L1318 126L1322 96M1296 136L1302 154" />
            <path d="M756 56H792" strokeDasharray="5 5" />
          </g>
          <g {...edge}>
            <path d="M290 440L300 458L302 482L312 488L298 520L284 566L286 590L276 640L272 690L270 740L264 760L268 784L300 798V826L312 844L276 832L252 790L252 740L258 670L262 620L274 590L276 560L286 500Z" fill="#e0cfc0" />
            <path d="M388 554L398 556L426 574L424 590L414 600L384 594Z" fill="#5fa56d" />
            <path d="M1288 88L1312 92L1328 70L1326 84L1316 102L1294 98Z" fill="#4f9a60" />
          </g>
          <g {...rough}>
            <path d="M262 670L254 710L252 730" strokeWidth="12" strokeDasharray="4 2 7 2" />
            <path d="M246 738L248 776L262 812L284 832L312 844" strokeWidth="12" strokeDasharray="9 1" />
            <path d="M268 694L274 730L266 756M272 800L298 800M276 810L296 828M258 782L270 778" strokeWidth="5" strokeDasharray="5 3" />
            <path d="M310 140H326" stroke="#5f8d5b" strokeWidth="7" />
            <path d="M722 8H730M372 182H376M1336 464H1342M1329 379H1332" strokeWidth="4" />
          </g>
        </g>

        {/* Europe and the Near East */}
        <g transform="translate(1300 420) scale(.333333)">
          <g fill={LAND}>
            <path d="M808 10L804 50L780 84L800 96L826 118L806 76L836 40V10Z" opacity=".7" />
            <path d="M602 140L640 156L690 186L690 208L662 210L640 204L644 226L668 262L674 226L714 228L716 182L736 190L756 154L770 172L804 160L830 136H866V690H760L720 670L640 690L640 640L560 634L540 590L520 576L480 546L430 530L402 536L380 560L360 570L342 600L300 640L276 620V572L362 556V536L312 500L350 484L384 468L470 420L540 410L580 370L590 340L602 326L640 318L606 298L590 230Z" />
            <path d="M286 660L306 630L420 622L436 630L430 660L450 666L500 684L560 670L640 682L650 720H244Z" />
          </g>
          <path d="M586 340L606 332L632 316L620 300L606 306L590 320ZM592 540L640 520L668 516L672 536L660 548L700 556L690 572L620 566L598 560ZM750 520L780 510L794 528L770 546L796 580L800 600L788 624L762 606L758 570L742 544ZM520 360L536 372L526 398L500 392L490 410L470 406L520 340ZM470 680L440 662L434 626L402 622L330 638L300 640L330 620L362 570L400 560L420 536L440 530L490 570L520 602L500 620L470 606L480 632L530 636L540 626L620 630L650 624L640 680L560 676L520 660L500 684ZM548 590L572 588L568 624L546 622ZM380 466L350 478L310 490L350 500L364 560L366 480Z" fill="#fff" />
          <path d="M440 528L460 560L496 598L490 612L470 588L444 560L430 540ZM474 530L510 556L530 588L538 610L554 620L560 600L540 580L500 530ZM428 564L434 580L428 600L424 580ZM460 614L488 612L484 624Z" fill={LAND} />
          <g {...line}>
            <path d="M556 416L580 392L610 404L612 426L628 440L614 454L552 450M612 452L640 446L684 476L680 500L650 520M552 454L546 484L560 498H598L596 520L580 546L540 544L526 530L530 510M494 504L520 500L528 512L516 530L494 522M488 530L510 556M488 544L530 540L534 566M740 500L752 460H780L810 454L860 468M800 570L820 536L856 540M730 590L752 584L740 600M640 690L650 640L720 620L730 590M650 640L640 660M680 670L720 640M720 620L740 650L752 684M366 484L384 500L410 508M312 556L352 560L372 566M282 716L286 700L330 680L344 668L342 644L306 634M420 626L426 664L440 680L436 720M560 676V720M800 620L826 612L856 626L852 660M640 690L676 690L700 670L760 700" />
          </g>
          <g {...edge}>
            <path d="M168 214L180 224L196 220L204 228L214 216L232 212L242 236L232 252L200 272L170 264L172 250L156 240L168 234L154 228Z" fill="#f5907b" />
            <path d="M460 182L490 150L520 130L560 108L594 112L608 126L596 144L572 136L564 160L540 166L528 152L510 168L490 176L470 240L470 262L456 266L456 320L446 350L416 362L400 350L396 290L440 264Z" fill="#f5937f" />
            <path d="M528 152L550 174L552 224L536 232L520 262L500 280L498 320L508 334L502 370L488 390L464 402L448 360L456 330V266L470 262L472 226L486 180L510 168Z" fill="#f07c6c" />
            <path d="M528 152L546 166L566 164L568 138L588 134L596 152L594 178L600 204L602 262L614 284L596 316L540 330L528 318L532 280L546 258L562 240L552 224L550 176Z" fill="#e96963" />
            <path d="M422 378L440 372L438 396L444 416L426 414ZM448 404L460 400L458 416Z" fill="#ef7a6a" />
            <path d="M546 346L580 340L582 368L556 366L548 358Z" fill="#df5359" />
            <path d="M530 376L546 366L580 372L586 392L568 394L530 388ZM530 390L568 394L574 404L560 420L540 418Z" fill="#f6a899" />
            <path d="M474 420L500 412L548 418L552 466L546 488L516 484L476 462Z" fill="#46855d" />
            <path d="M408 432L430 418L446 424L468 420L474 460L456 472L466 492L454 506L420 506L418 488L406 476Z" fill="#f7a492" />
            <path d="M388 460L394 438L412 432L408 460Z" fill="#e4615f" />
            <path d="M376 464L390 456L406 462L404 478L390 476Z" fill="#4a8a60" />
            <path d="M456 474L480 464L506 482L492 492L466 488Z" fill="#bcd8b4" />
            <path d="M436 508L458 508L466 494L492 492L490 514L464 520L440 514Z" fill="#a4da99" />
            <path d="M494 496L512 484L542 488L536 496L500 504Z" fill="#4b905f" />
            <path d="M466 518L486 514L480 530L466 528Z" fill="#5fa56d" />
            <path d="M404 518L416 506L434 506L440 516L426 524H408Z" fill="#c13b57" />
            <path d="M538 548L560 552L590 550L580 576L562 578L540 572Z" fill="#7cb876" />
            <path d="M684 552L712 560L734 568L738 580L700 576Z" fill="#7fbe7a" />
            <path d="M282 572L302 572L296 622L282 624L278 604Z" fill="#6cb16f" />
            <path d="M618 642L636 640L628 650Z" fill="#7fbe7a" />
            <path d="M310 372L316 354L328 356L326 372L340 380L330 396L346 414L352 434L368 440L364 460L346 470L310 474L330 460L316 458L332 436L330 414L314 400ZM286 414L300 404L308 410L304 418Z" fill="#98d28e" />
            <path d="M272 422L290 414L304 426L302 446L272 456L278 440Z" fill="#c43c56" />
            <path d="M504 366L512 366L504 380Z" fill="#ee7868" />
          </g>
          <g {...rough}>
            <path d="M460 182L486 158L520 134L560 112L606 122M478 190L462 232L442 264M400 284L402 320L404 350" strokeWidth="7" strokeDasharray="7 2 3 3" />
            <path d="M468 176L474 200M480 190L468 210M298 356L308 392M292 378L304 396M340 322L346 326M326 346L330 350" strokeWidth="5" strokeDasharray="5 3" />
            <path d="M154 220L176 224M210 226L214 216M284 408L294 412M444 384L456 404M470 398L500 376M424 396L448 414M512 328L530 326M548 350L540 356M310 472L360 466" strokeWidth="4" strokeDasharray="5 3" />
            <path d="M96 598H99M116 606L130 608M142 615H148M210 667H220M470 635H474M334 486H340" strokeWidth="4" />
          </g>
          <circle cx="546" cy="368" r="9" fill="#fff" stroke="#777" strokeWidth="2" />
        </g>
      </g>
    </svg>
  );
}

function Workspace() {
  return (
    <main className="mr-[3px] ml-[8px] flex min-w-0 flex-1 flex-col">
      <div className="flex flex-col gap-[7px]">
        <Shelf label="Columns" pill="Longitude (generated)" icon={<Svg w={14} h={16}><path d="M2 4V16M7 4V16M12 4V16" stroke={G} strokeWidth="2.6" /><path d="M2 0V2.4M7 0V2.4M12 0V2.4" stroke={G} strokeWidth="2.6" /></Svg>} />
        <Shelf label="Rows" pill="Latitude (generated)" icon={<Svg w={15} h={14}><path d="M4 2H15M4 7H15M4 12H15M0 2H2.4M0 7H2.4M0 12H2.4" stroke={G} strokeWidth="2.6" /></Svg>} />
      </div>
      <div className="mt-[8px] mb-[7px] flex min-h-0 flex-1 items-start gap-[7px]">
        <section className="flex h-full min-w-0 flex-1 flex-col border border-[#d0d0d0] bg-white pr-[4px] pb-[4px] pl-[3px]">
          <h2 className="h-[84px] pt-[14px] pr-[200px] text-center text-[43px] leading-[60px] text-[#333]">Top 40 Ranking Countries</h2>
          <div className="relative min-h-0 flex-1 border border-[#e4e4e4]">
            <WorldMap />
            <div className="absolute bottom-px left-[2px] flex gap-[6px] bg-[#fafafa] px-[2px] text-[14px] leading-[19px] text-[#555]">
              <a href="#mapbox">© 2023 Mapbox</a>
              <a href="#openstreetmap">© OpenStreetMap</a>
            </div>
          </div>
        </section>
        <section className="h-[85px] w-[203px] shrink-0 border border-[#d0d0d0] bg-white pt-[4px] text-[15px] text-[#333]">
          <h3 className="pl-[4px] leading-[22px]">World Rank</h3>
          <div className="mr-[10px] ml-[9px] mt-[8px] h-[19px] border border-[#a8a08e] bg-[linear-gradient(90deg,#bf4262,#e05a62_12%,#f37a6c_24%,#fca590_37%,#fdb7ab_46%,#d8dccb_50%,#a9df9b_54%,#97d18b_62%,#79b470_77%,#539264_92%,#4b8760)]" />
          <div className="ml-[95px] mt-px h-[5px] w-px bg-black" />
          <div className="flex justify-between pr-[11px] pl-[9px] leading-[14px]"><span>1</span><span>40</span></div>
        </section>
      </div>
    </main>
  );
}

/* ---------- sheet tabs and status bar ---------- */

function SheetTabs() {
  const b = "grid w-[40px] place-items-center border-r border-[#c8c8c8]";
  return (
    <footer className="shrink-0">
      <div className="flex h-[39px] border-y border-[#c8c8c8] bg-[#e6e6e6] text-[15px] text-[#6a6a6a]">
        <button className="flex w-[158px] items-center gap-[7px] border-r border-[#c8c8c8] pb-[6px] pl-[14px]">
          <Svg w={10} h={14}><ellipse cx="5" cy="2.8" rx="4.3" ry="2" stroke={G} strokeWidth="1.2" /><path d="M.7 3V11Q1 13.2 5 13.2T9.3 11V3" stroke={G} strokeWidth="1.2" /></Svg>
          Data Source
        </button>
        <button className="w-[235px] border-r border-[#c8c8c8] pb-[6px]">2022 Economic freedom Score</button>
        <button className="w-[201px] border-r border-[#c8c8c8] bg-[#fafafa] pb-[6px] font-['Open_Sans',sans-serif] font-semibold text-[#222]">Top 40 Ranking countries</button>
        <button aria-label="New worksheet" className={b}><Svg w={20} h={20}><path d="M10 15H.7V.7H15V9" stroke={G} strokeWidth="1.3" /><path d="M4.5 11V9M7.5 11V5M10.5 11V7" stroke={G} strokeWidth="1.2" /><path d="M15 10V20M10 15H20" stroke={G} strokeWidth="2.2" /></Svg></button>
        <button aria-label="New dashboard" className={b}><Svg w={20} h={20}><path d="M10 14H.7V.7H15V9M.7 7.3H15M8 .7V14" stroke={G} strokeWidth="1.3" /><path d="M15 10V20M10 15H20" stroke={G} strokeWidth="2.2" /></Svg></button>
        <button aria-label="New story" className={b}><Svg w={20} h={20}><path d="M9 16L.7 13V.7L7.5 3L14.5 .7V9M7.5 3V15.5" stroke={G} strokeWidth="1.3" /><path d="M15 10V20M10 15H20" stroke={G} strokeWidth="2.2" /></Svg></button>
      </div>
      <div className="flex h-[20px] gap-[15px] bg-[#eaeaea] pl-[13px] font-['Open_Sans',sans-serif] text-[13px] leading-[21px] text-[#333]">
        <span>40 marks</span><span>1 row by 1 column</span><span>SUM(World Rank): 820</span>
      </div>
    </footer>
  );
}

/* ---------- taskbar ---------- */

function TaskIcon({ label, running, children }) {
  return (
    <button aria-label={label} className="relative grid h-[60px] w-[55px] place-items-center">
      {children}
      {running && <span className="absolute bottom-[5px] h-[4px] w-[8px] rounded-full bg-[#9a9a9a]" />}
    </button>
  );
}

function Taskbar() {
  return (
    <div className={`${UI} grid h-[60px] shrink-0 grid-cols-[1fr_auto_1fr] items-center border-t border-[#3c3c3c] bg-[#202020] text-[14px] text-[#f2f2f2]`}>
      <button className="flex items-center pb-[2px] pl-[27px] text-left">
        <Svg w={29} h={29}>
          <defs><linearGradient id="sun" x1="0" y1="0" x2="1" y2="1"><stop stopColor="#f7bb3d" /><stop offset="1" stopColor="#f07a12" /></linearGradient><linearGradient id="cloud" x1="0" y1="0" x2="0" y2="1"><stop stopColor="#9dbdf4" /><stop offset="1" stopColor="#e6eefc" /></linearGradient></defs>
          <circle cx="13" cy="13" r="12.5" fill="url(#sun)" />
          <path d="M8 28A5 5 0 0 1 7.5 18.5A8 8 0 0 1 22 17.5A5.4 5.4 0 0 1 23 28Z" fill="url(#cloud)" />
        </Svg>
        <span className="ml-[8px] leading-[20px]">37°C<br /><span className="text-[#c8c8c8]">Partly sunny</span></span>
      </button>
      <div className="flex items-center pl-[3px]">
        <TaskIcon label="Start">
          <Svg w={29} h={29}>
            <defs><linearGradient id="win" x1="0" y1="0" x2="1" y2="1"><stop stopColor="#7ce5fb" /><stop offset="1" stopColor="#0a94f5" /></linearGradient></defs>
            <path d="M0 1Q0 0 1 0H14V14H0ZM15 0H28Q29 0 29 1V14H15ZM0 15H14V29H1Q0 29 0 28ZM15 15H29V28Q29 29 28 29H15Z" fill="url(#win)" />
          </Svg>
        </TaskIcon>
        <label className="ml-[5px] flex h-[40px] w-[274px] items-center rounded-full bg-[#3a3a3a] pl-[14px]">
          <Search size={20} strokeWidth={2} />
          <input type="text" aria-label="Search" placeholder="Search" className="ml-[12px] w-[120px] text-[16px] outline-none placeholder:text-[#d8d8d8]" />
          <svg width="60" height="34" viewBox="0 0 60 34" className="mr-[6px] ml-auto" aria-hidden="true">
            <path d="M0 33Q30 26 60 33Z" fill="#7f9440" />
            <path d="M12 8H26V32H12ZM28 8H41V32H28ZM2 20H12V32H2Z" fill="#cdb093" />
            <path d="M13 1H25V10H13ZM29 1H40V10H29ZM24 13H30V32H24Z" fill="#dcc2a6" />
            <path d="M15 3H18V13H15ZM20 3H23V13H20ZM31 3H34V13H31ZM36 3H39V13H36Z" fill="#6b4a3a" />
            <circle cx="27" cy="18" r="3" fill="#7a5646" />
            <path d="M14 31V26Q16 23 18 26V31ZM25 31V26Q27 22 29 26V31ZM34 31V26Q36 23 38 26V31ZM4 23H6V30H4ZM8 23H10V30H8Z" fill="#6b4a3a" />
            <path d="M12 21H41V22H12ZM12 14H24V15H12ZM30 14H41V15H30Z" fill="#8d6b56" />
            <path d="M46 2L58 31M46 2L48 22M42 21L54 17" stroke="#b9a8a8" strokeWidth="1.7" fill="none" />
          </svg>
        </label>
        <span className="w-[3px]" />
        <TaskIcon label="Task view"><Svg w={31} h={28}><path d="M8 0H31V20H8Z" fill="#ececec" /><path d="M0 8H23V28H0Z" fill="#777" fillOpacity=".8" /><path d="M8 8H23V20H8Z" fill="#b4b4b4" /></Svg></TaskIcon>
        <TaskIcon label="Chat">
          <Svg w={29} h={29}><defs><linearGradient id="chat" x1="0" y1="0" x2="1" y2="1"><stop stopColor="#a868a8" /><stop offset=".5" stopColor="#6562c8" /><stop offset="1" stopColor="#4a55c4" /></linearGradient></defs><path d="M14.5 0A14 14 0 1 1 9 27L1 28L2.5 21A14 14 0 0 1 14.5 0Z" fill="url(#chat)" /><rect x="6" y="9" width="11" height="11" rx="2" fill="#fff" /><path d="M18.5 13L23 10V19L18.5 16Z" fill="#fff" /></Svg>
        </TaskIcon>
        <TaskIcon label="File Explorer" running>
          <Svg w={31} h={28}><path d="M0 3Q0 1 2 1H10L13 4H20V12H0Z" fill="#e09b16" /><path d="M0 8H10L13 5H29Q31 5 31 7V25Q31 27 29 27H2Q0 27 0 25Z" fill="#fcd05a" /><path d="M5 27V22Q5 19 8 19H22Q25 19 25 22V27Z" fill="#1077cf" /><path d="M9 23H21" stroke="#0a4f9c" strokeWidth="2" /></Svg>
        </TaskIcon>
        <TaskIcon label="Microsoft Store">
          <Svg w={30} h={30}><path d="M8 6V2Q8 1 9 1H21Q22 1 22 2V6" stroke="#2bb0ee" strokeWidth="2.2" /><path d="M0 6H30V26Q30 30 26 30H4Q0 30 0 26Z" fill="#f0f0f0" /><path d="M9 12H14V17H9Z" fill="#f25022" /><path d="M15.5 12H20.5V17H15.5Z" fill="#7fba00" /><path d="M9 18.5H14V23.5H9Z" fill="#00a4ef" /><path d="M15.5 18.5H20.5V23.5H15.5Z" fill="#ffb900" /></Svg>
        </TaskIcon>
        <TaskIcon label="Edge">
          <Svg w={30} h={30}><defs><linearGradient id="edgeTop" x1="0" y1="0" x2="1" y2=".6"><stop stopColor="#2aa6e0" /><stop offset=".6" stopColor="#35c1c8" /><stop offset="1" stopColor="#66d84c" /></linearGradient></defs><circle cx="15" cy="15" r="15" fill="#1379c9" /><path d="M0 15A15 15 0 0 1 30 14C30 19 25 21 20 20C17 19 19 17 19 14C19 10 14 8 9 9C4 10 1 13 0 15Z" fill="url(#edgeTop)" /><path d="M11 13C9 22 17 27 27 24A15 15 0 0 1 12 29.500C4 24 5 15 11 13Z" fill="#124e93" /><path d="M19 14C19 17 17 19 20 20C24 21 28 19 30 17L28 23Q20 27 15 21Q12 16 15 11Q19 11 19 14Z" fill="#202020" /></Svg>
        </TaskIcon>
        <TaskIcon label="Help">
          <Svg w={36} h={36}><circle cx="15" cy="21" r="14" fill="#0d96d8" stroke="#fff" strokeWidth="1.5" /><path d="M10 17Q10 12 15 12T20 16.5Q20 19 17 20.5Q15 21.5 15 24.5" stroke="#fff" strokeWidth="3.4" /><circle cx="15" cy="29.5" r="2.200" fill="#fff" /><circle cx="26" cy="10" r="10" fill="#fcc20f" /></Svg>
        </TaskIcon>
        <TaskIcon label="Firefox">
          <Svg w={30} h={30}><defs><linearGradient id="fox" x1=".8" y1="0" x2=".3" y2="1"><stop stopColor="#ffe14a" /><stop offset=".45" stopColor="#ff8a26" /><stop offset="1" stopColor="#f0215c" /></linearGradient></defs><path d="M19 0Q29 8 29 16A14 14 0 1 1 1 13Q2 8 4 6L7 9Q13 7 15 9Q14 4 19 0Z" fill="url(#fox)" /><circle cx="15" cy="15.5" r="7" fill="#7a3fd6" /><path d="M4 9Q10 8 15 12Q13 14 11 14Q9 19 14 21Q6 21 5 14Z" fill="#ff9a2a" /></Svg>
        </TaskIcon>
        <TaskIcon label="myHP"><span className="grid h-[30px] w-[30px] place-items-center bg-[#0a95d7] text-[10px] font-semibold text-white italic">myhp</span></TaskIcon>
        <TaskIcon label="Chrome" running>
          <Svg w={36} h={36}><circle cx="15" cy="21" r="14.5" fill="#3a9c4f" /><path d="M15 21L2.4 13.8A14.5 14.5 0 0 1 27.6 13.8Z" fill="#e1392f" /><path d="M15 21L27.6 13.8A14.5 14.5 0 0 1 15 35.5Z" fill="#fbc21d" /><circle cx="15" cy="21" r="7" fill="#fff" /><circle cx="15" cy="21" r="5.4" fill="#3f7fe8" /><circle cx="26" cy="10" r="10" fill="#22a154" /></Svg>
        </TaskIcon>
      </div>
      <div className="flex items-center justify-end pr-[20px] pb-[2px]">
        <button aria-label="Show hidden icons"><ChevronUp size={21} strokeWidth={2} /></button>
        <button aria-label="Sync" className="ml-[19px]"><Svg w={22} h={22}><path d="M2 10A8.5 8.5 0 0 1 17 5.5M17.5 1V6.5H12.5M10 19.5Q5 19 3 15.5M2.5 20V15H8" stroke="#e8e8e8" strokeWidth="1.5" /><circle cx="16.5" cy="16" r="5" fill="#ff9a0a" /></Svg></button>
        <button className="ml-[22px] text-center leading-[20px]">ENG<br />IN</button>
        <button aria-label="Network, volume and battery" className="ml-[22px] flex items-center gap-[10px]">
          <Svg w={20} h={16}><path d="M1 6Q10 -3 19 6M4 9Q10 3 16 9M7 12Q10 9 13 12" stroke="#f2f2f2" strokeWidth="1.6" /><circle cx="10" cy="14" r="1.700" fill="#f2f2f2" /></Svg>
          <Svg w={20} h={16}><path d="M1 5.5H4L9 1.5V14.5L4 10.5H1Z" stroke="#f2f2f2" strokeWidth="1.4" /><path d="M11.5 5Q13 8 11.5 11M14 3Q17 8 14 13" stroke="#f2f2f2" strokeWidth="1.5" /><path d="M17 1Q21 8 17 15" stroke="#777" strokeWidth="1.3" /></Svg>
          <Svg w={20} h={17}><path d="M8 3.5H15Q17 3.5 17 5.5V13Q17 15 15 15H3Q1.5 15 1.5 13V10M17 7.5H19V11.5H17" stroke="#f2f2f2" strokeWidth="1.5" /><path d="M9 6L4 13H10Z" fill="#f2f2f2" /><path d="M4 0L1 7H4L3 11L8 5H5L6 0Z" fill="#f2f2f2" /></Svg>
        </button>
        <button className="ml-[20px] text-right text-[15px] leading-[20px]">01:54 PM<br />15-04-2023</button>
      </div>
    </div>
  );
}

export default function App() {
  return (
    <div className={`${UI} flex h-screen flex-col overflow-hidden bg-[#f2f2f2]`}>
      <BrowserChrome />
      <AppHeader />
      <Toolbar />
      <div className="flex min-h-0 flex-1">
        <DataPane />
        <Cards />
        <Workspace />
      </div>
      <SheetTabs />
      <Taskbar />
    </div>
  );
}
